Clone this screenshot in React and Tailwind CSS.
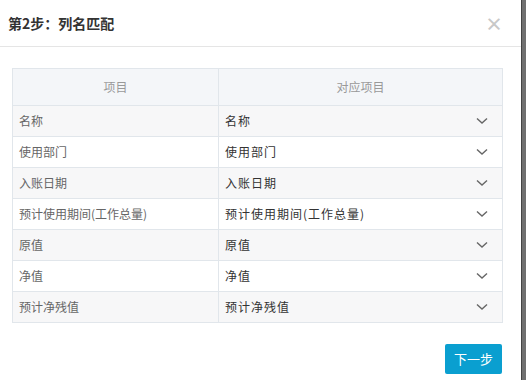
import React from 'react';

const rows = [
  ['名称', '名称'],
  ['使用部门', '使用部门'],
  ['入账日期', '入账日期'],
  ['预计使用期间(工作总量)', '预计使用期间(工作总量)'],
  ['原值', '原值'],
  ['净值', '净值'],
  ['预计净残值', '预计净残值'],
];

function Chevron() {
  return (
    <svg width="12" height="8" viewBox="0 0 12 8" className="shrink-0">
      <path d="M1 1.5 L6 6 L11 1.5" fill="none" stroke="#666" strokeWidth="1.4" />
    </svg>
  );
}

export default function App() {
  return (
    <div className="flex w-[526px] h-[380px] bg-[#707070]" style={{ fontFamily: '"Noto Sans CJK SC", "Noto Sans", sans-serif' }}>
      <div className="w-[521px] h-full bg-white flex flex-col">
        {/* header */}
        <div className="h-[47px] flex items-center justify-between pl-[8px] pr-[18px] border-b border-[#e5e5e5] shrink-0">
          <h2 className="text-[14px] font-bold text-[#333] leading-none">第2步：列名匹配</h2>
          <span className="text-[18px] font-bold text-[#c8c8c8] leading-none">×</span>
        </div>

        {/* table */}
        <div className="pt-[21px] px-[12px]">
          <table className="w-[491px] border-collapse text-[12px]">
            <thead>
              <tr className="h-[37px] bg-[#f4f6f9]">
                <th className="w-[206px] border border-[#e1e6eb] font-normal text-[#999]">项目</th>
                <th className="border border-[#e1e6eb] font-normal text-[#999]">对应项目</th>
              </tr>
            </thead>
            <tbody>
              {rows.map(([a, b], i) => (
                <tr key={a} className={i % 2 === 0 ? 'h-[31px] bg-[#f7f7f8]' : 'h-[31px] bg-white'}>
                  <td className="border border-[#e1e6eb] px-[6px] text-[#666]">{a}</td>
                  <td className="border border-[#e1e6eb] pl-[6px] pr-[14px]">
                    <div className="flex items-center justify-between">
                      <span className="text-[12px] tracking-[1px] text-[#333]">{b}</span>
                      <Chevron />
                    </div>
                  </td>
                </tr>
              ))}
            </tbody>
          </table>
        </div>

        {/* footer */}
        <div className="flex justify-end pr-[19px] pt-[21px]">
          <button className="w-[57px] h-[30px] rounded-[2px] bg-[#0a9fd0] text-white text-[13px]">下一步</button>
        </div>
      </div>
      <div className="w-[1px] h-full bg-[#444]" />
    </div>
  );
}
